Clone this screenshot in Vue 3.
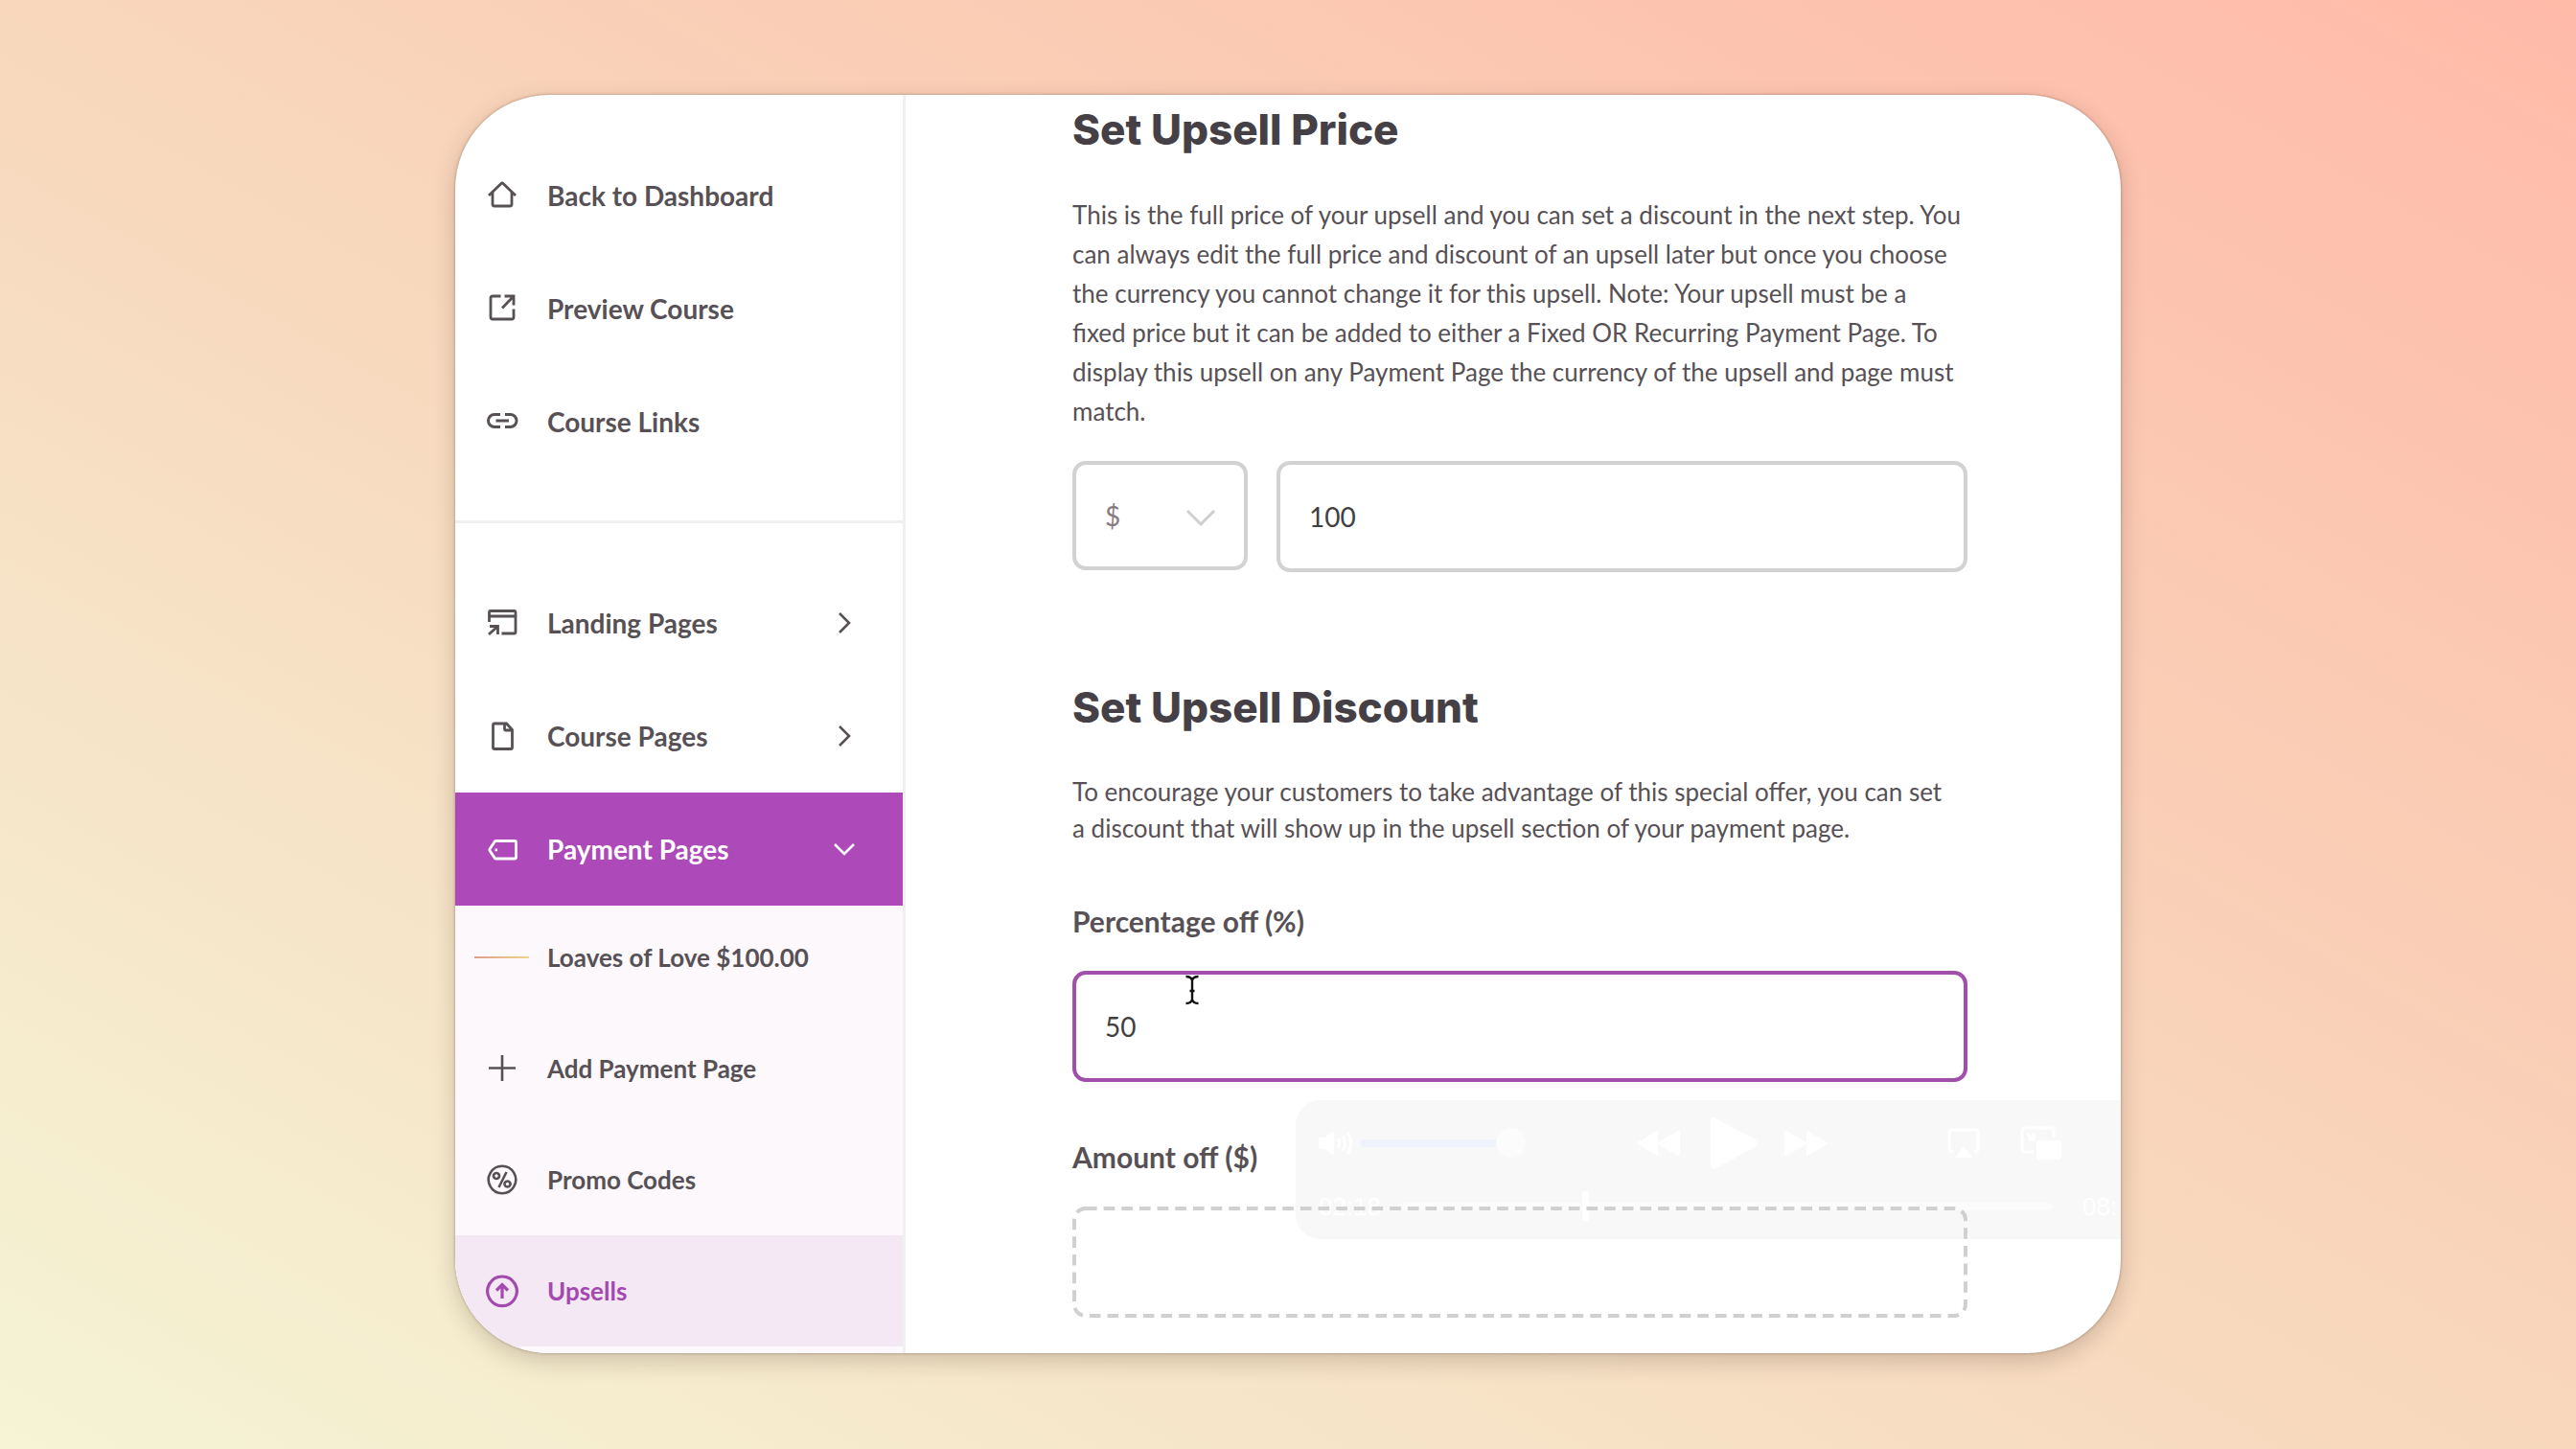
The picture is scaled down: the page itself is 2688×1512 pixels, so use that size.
<template>
  <div class="page">
    <div class="window">
      <nav class="sidebar" aria-label="Course">
        <ul class="menu menu-top">
          <li v-for="item in topLinks" :key="item.label">
            <a class="menu-row" href="#">
              <span class="menu-icon">
                <svg viewBox="0 0 40 40" aria-hidden="true"><path :d="item.icon" :stroke-width="item.stroke" /></svg>
              </span>
              {{ item.label }}
            </a>
          </li>
        </ul>

        <ul class="menu">
          <li v-for="item in sections" :key="item.label">
            <button
              class="menu-row"
              :class="{ open: item.label === openSection }"
              type="button"
              :aria-expanded="item.label === openSection"
              @click="openSection = item.label"
            >
              <span class="menu-icon">
                <svg viewBox="0 0 40 40" aria-hidden="true"><path :d="item.icon" :stroke-width="item.stroke" /></svg>
              </span>
              {{ item.label }}
              <svg class="chevron" viewBox="0 0 24 24" aria-hidden="true">
                <path :d="item.label === openSection ? 'M2 7 12 17 22 7' : 'M7 2 17 12 7 22'" stroke-width="2.6" />
              </svg>
            </button>
          </li>
        </ul>

        <ul class="menu submenu">
          <li v-for="item in paymentLinks" :key="item.label">
            <a class="menu-row" :class="{ current: item.current }" href="#">
              <span class="menu-icon">
                <svg v-if="item.icon" viewBox="0 0 40 40" aria-hidden="true"><path :d="item.icon" :stroke-width="item.stroke" /></svg>
                <span v-else class="thumb"></span>
              </span>
              {{ item.label }}
            </a>
          </li>
        </ul>
      </nav>

      <main class="content">
        <section>
          <h2>Set Upsell Price</h2>
          <p class="intro">
            This is the full price of your upsell and you can set a discount in the next step. You can always edit the
            full price and discount of an upsell later but once you choose the currency you cannot change it for this
            upsell. Note: Your upsell must be a<br />
            fixed price but it can be added to either a Fixed OR Recurring Payment Page. To display this upsell on any
            Payment Page the currency of the upsell and page must match.
          </p>
          <div class="price-row">
            <div class="select-wrap">
              <select v-model="currency" class="box" aria-label="Currency">
                <option>$</option>
              </select>
              <svg class="select-arrow" viewBox="0 0 32 20" aria-hidden="true">
                <path d="M2 2 16 16 30 2" stroke-width="3" />
              </svg>
            </div>
            <input v-model="price" class="box" type="text" aria-label="Full price" />
          </div>
        </section>

        <section>
          <h2>Set Upsell Discount</h2>
          <p>
            To encourage your customers to take advantage of this special offer, you can set<br />
            a discount that will show up in the upsell section of your payment page.
          </p>
          <label for="percent-off">Percentage off (%)</label>
          <div class="field">
            <input id="percent-off" v-model="percentOff" class="box active" type="text" />
            <svg class="text-cursor" viewBox="0 0 16 32" aria-hidden="true">
              <path d="M1.500 2Q7 2 8 6Q9 2 14.500 2M8 5V27M1.500 30Q7 30 8 26Q9 30 14.500 30M5.500 17H10.500" />
            </svg>
          </div>
          <label for="amount-off">Amount off ($)</label>
          <div class="field">
            <input id="amount-off" v-model="amountOff" class="box dashed" type="text" />
            <svg class="dashes" aria-hidden="true"><rect x="2" y="2" rx="12" /></svg>
          </div>
        </section>
      </main>

      <div class="player">
        <div class="player-row">
          <svg class="speaker" viewBox="0 0 36 28" aria-hidden="true">
            <path d="M0 9Q0 8 1 8H6L14 2Q16 1 16 3V25Q16 27 14 26L6 20H1Q0 20 0 19Z" />
            <path class="wave" d="M20 9Q23 14 20 19M25 6Q30 14 25 22M30 3Q37 14 30 25" />
          </svg>
          <input v-model="volume" class="volume" type="range" aria-label="Volume" />
          <button class="rewind" type="button" aria-label="Rewind">
            <svg viewBox="0 0 46 28"><path d="M0 14 22 1Q23 0 23 2V13L44 1Q46 0 46 2V26Q46 28 44 27L23 15V26Q23 28 22 27Z" /></svg>
          </button>
          <button class="play" type="button" aria-label="Play">
            <svg viewBox="0 0 50 56"><path d="M0 4Q0 0 5 2L46 24Q52 28 46 32L6 54Q0 57 0 51Z" /></svg>
          </button>
          <button class="forward" type="button" aria-label="Fast forward">
            <svg viewBox="0 0 46 28"><path d="M46 14 24 1Q23 0 23 2V13L2 1Q0 0 0 2V26Q0 28 2 27L23 15V26Q23 28 24 27Z" /></svg>
          </button>
          <button class="airplay" type="button" aria-label="AirPlay">
            <svg viewBox="0 0 34 32"><path class="line" d="M6 24H4Q2 24 2 22V4Q2 2 4 2H30Q32 2 32 4V22Q32 24 30 24H28" /><path d="M17 19 26 31H8Z" /></svg>
          </button>
          <button class="pip" type="button" aria-label="Picture in picture">
            <svg viewBox="0 0 44 36"><path class="line" d="M14 27H5Q2 27 2 24V5Q2 2 5 2H32Q35 2 35 5V12M7 8 14 14M8 14H14V8" /><rect x="17" y="15" width="26" height="20" rx="3" /></svg>
          </button>
        </div>
        <div class="player-row">
          <span class="time">02:18</span>
          <input v-model="position" class="scrub" type="range" aria-label="Position" />
          <span class="time">08:</span>
        </div>
      </div>
    </div>
  </div>
</template>

<script setup>
import { ref } from 'vue';

const openSection = ref('Payment Pages');
const currency = ref('$');
const price = ref('100');
const percentOff = ref('50');
const amountOff = ref('');
const volume = ref(100);
const position = ref(28);

const topLinks = [
  { label: 'Back to Dashboard', stroke: 2.8, icon: 'M6 20 19 7.500Q20 6.500 21 7.500L34 20M10 17V29Q10 31 12 31H28Q30 31 30 29V17' },
  { label: 'Preview Course', stroke: 2.8, icon: 'M18.500 7H10Q8 7 8 9V29Q8 31 10 31H30Q32 31 32 29V20.500M22.500 7H32V16.500M32 7 20 19.500' },
  { label: 'Course Links', stroke: 3, icon: 'M18 12.500H12a6.500 6.500 0 0 0 0 13H18M23 12.500H28.500a6.500 6.500 0 0 1 0 13H23M13.500 19H27' },
];

const sections = [
  { label: 'Landing Pages', stroke: 2.8, icon: 'M6.500 19V9Q6.500 7.500 8 7.500H32.500Q34 7.500 34 9V29.500Q34 31 32.500 31H19.500M6.500 13H34M6 32 15.500 23.500M7 23.500H15.500V32' },
  { label: 'Course Pages', stroke: 2.8, icon: 'M12 7H24.500L30.500 13.500V32Q30.500 33.500 29 33.500H12Q10.500 33.500 10.500 32V8.500Q10.500 7 12 7ZM22.500 7V13Q22.500 14 23.500 14H30' },
  { label: 'Payment Pages', stroke: 2.8, icon: 'M13.500 11.500H33Q34.500 11.500 34.500 13V28.500Q34.500 30 33 30H13.500Q12.500 30 12 29L7 21.500Q6.500 20.700 7 20L12 12.500Q12.500 11.500 13.500 11.500ZM12.500 20.800H15' },
];

const paymentLinks = [
  { label: 'Loaves of Love $100.00' },
  { label: 'Add Payment Page', stroke: 2.6, icon: 'M20 6V33M6 19.500H34' },
  { label: 'Promo Codes', stroke: 2.6, icon: 'M20 5.800a14.200 14.200 0 1 0 .01 0ZM16.500 28 24.500 12M14 13a3 3 0 1 0 .01 0ZM25.500 21.500a3 3 0 1 0 .01 0Z' },
  { label: 'Upsells', stroke: 3.2, current: true, icon: 'M20 5a15.300 15.300 0 1 0 .01 0ZM20 28V14M14 19.500 20 13.500 26 19.500' },
];
</script>

<style>
body { margin: 0; }
</style>

<style scoped>
.page {
  min-height: 100vh;
  box-sizing: border-box;
  padding: 99px 24px 100px;
  background: linear-gradient(to top right, #f5f4d5 0%, #f8d7bc 50%, #ffbaa8 100%);
  color: #575156;
  font-family: Lato, "Open Sans", sans-serif;
}

.window {
  position: relative;
  display: flex;
  max-width: 1738px;
  margin: 0 auto;
  overflow: hidden;
  border-radius: 98px;
  background: #fff;
  box-shadow: 0 0 3px rgba(60, 40, 30, .4), 0 8px 24px rgba(60, 40, 30, .22);
}

.sidebar {
  flex: 0 0 467px;
  display: flex;
  flex-direction: column;
  border-right: 3px solid #f0f0f0;
}

.menu { margin: 0; padding: 0; list-style: none; }
.menu-top { margin-bottom: 45px; padding: 46px 0 44px; border-bottom: 3px solid #efefef; }
.submenu { flex: 1; margin-top: -4px; background: #fcf8fc; }

.menu-row {
  display: flex;
  align-items: center;
  gap: 19px;
  width: 100%;
  height: 118px;
  box-sizing: border-box;
  padding: 0 49px 0 20px;
  border: 0;
  background: none;
  color: inherit;
  font: 700 28px/36px Lato, "Open Sans", sans-serif;
  text-align: left;
  text-decoration: none;
  cursor: pointer;
}

.submenu .menu-row { height: 116px; font-size: 26px; }
.menu-row.open { position: relative; z-index: 1; background: #ad49b8; color: #fff; }
.menu-row.current { background: #f4e8f5; color: #a349af; }

.menu-icon { display: flex; flex: 0 0 57px; justify-content: center; }
.menu-icon svg { width: 40px; height: 40px; }
.chevron { width: 24px; height: 24px; margin-left: auto; }
.menu-row path,
.select-arrow path { fill: none; stroke: currentColor; }
.thumb { width: 57px; height: 2px; background: linear-gradient(90deg, #e29c88, #f0d48c); }

.content { flex: 1; min-width: 0; padding: 10px 160px 37px 174px; }

h2 { margin: 0 0 43px; color: #454045; font: 800 44px/52px Inter, sans-serif; }
p { margin: 0; font-size: 26px; line-height: 38px; }
.intro { line-height: 41px; }

.price-row { display: flex; gap: 30px; margin: 31px 0 115px; }
.select-wrap { position: relative; flex: 0 0 183px; color: #cfcfcf; }
.select-arrow { position: absolute; top: 50px; right: 33px; width: 32px; height: 20px; pointer-events: none; }

.box {
  display: block;
  width: 100%;
  height: 116px;
  box-sizing: border-box;
  padding: 0 30px;
  border: 4px solid #d2d2d2;
  border-radius: 14px;
  outline: 0;
  background: transparent;
  color: #423f43;
  font: 400 28px/36px Lato, "Open Sans", sans-serif;
}

select.box { height: 114px; appearance: none; color: #857c80; }
.box.active { border-color: #a04fab; }
.box.dashed { border-color: transparent; }

label { display: block; margin: 60px 0 34px; font-size: 30px; font-weight: 700; line-height: 36px; }
.field { position: relative; z-index: 1; }

.text-cursor { position: absolute; top: 4px; left: 117px; width: 16px; height: 32px; }
.text-cursor path { fill: none; stroke: #111; stroke-width: 2.4; }
.dashes { position: absolute; inset: 0; width: 100%; height: 100%; pointer-events: none; }
.dashes rect {
  width: calc(100% - 4px);
  height: calc(100% - 4px);
  fill: none;
  stroke: #d0d0d0;
  stroke-width: 4;
  stroke-dasharray: 11.600 7.060;
}

/* Faded playback bar, cut off by the window's edge */
.player {
  position: absolute;
  top: 1049px;
  left: 877px;
  display: flex;
  flex-direction: column;
  gap: 22px;
  width: 911px;
  height: 145px;
  box-sizing: border-box;
  padding: 17px 24px;
  border-radius: 26px;
  background: #f8f8f8;
  color: #fff;
}

.player-row { display: flex; align-items: center; }
.player svg { display: block; width: 100%; fill: #fff; }
.player .line,
.player .wave { fill: none; stroke: #fff; stroke-width: 3; }
.player button { flex: none; padding: 0; border: 0; background: none; }
.player .speaker { width: 36px; }
.player .rewind { width: 46px; margin-left: 115px; }
.player .play { width: 50px; margin-left: 32px; }
.player .forward { width: 46px; margin-left: 27px; }
.player .airplay { width: 34px; margin-left: 124px; }
.player .pip { width: 44px; margin-left: 42px; }
.time { flex: 0 0 66px; font: 400 26px/32px "Liberation Sans", sans-serif; }

.player input { height: 32px; appearance: none; background: transparent; }
.player .volume { width: 173px; margin: 0 0 0 7px; }
.volume::-webkit-slider-runnable-track { height: 8px; border-radius: 4px; background: #eef3fb; }
.volume::-webkit-slider-thumb { appearance: none; width: 31px; height: 31px; margin-top: -12px; border-radius: 50%; background: #fcfcfc; }
.player .scrub { flex: 1; min-width: 0; margin: 0 31px 0 21px; }
.scrub::-webkit-slider-runnable-track { height: 8px; border-radius: 4px; background: #fbfbfb; }
.scrub::-webkit-slider-thumb { appearance: none; width: 7px; height: 31px; margin-top: -12px; border-radius: 3px; background: #fff; }
</style>
